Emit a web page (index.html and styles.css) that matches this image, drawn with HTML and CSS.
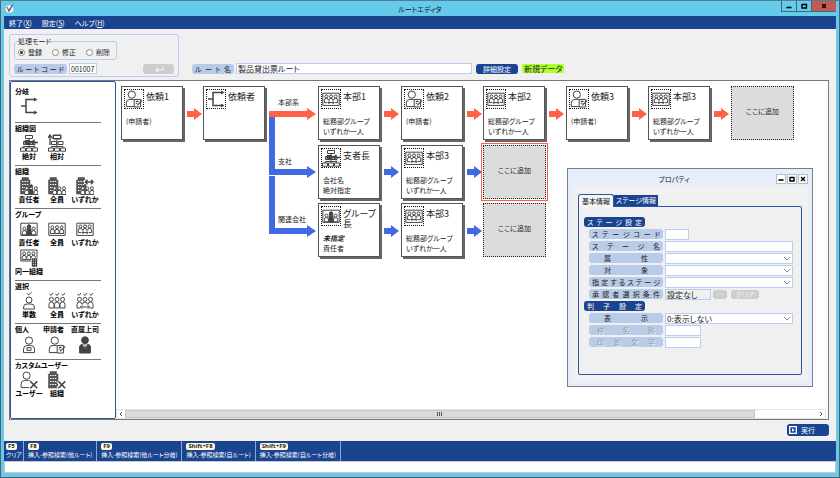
FILE: index.html
```html
<!DOCTYPE html>
<html lang="ja">
<head>
    <meta charset="UTF-8">
    <meta name="viewport" content="width=device-width, initial-scale=1.0">
    <title>ルートエディタ</title>
    <link rel="stylesheet" href="styles.css">
</head>
<body>
    <!-- icon set -->
    <svg class="sprite" aria-hidden="true">
        <defs>
            <g id="bust">
                <circle cx="0" cy="-2.2" r="1.5"/>
                <path d="M-2 4V1.6Q-2 -.2 0 -.2T2 1.6V4z"/>
            </g>
            <g id="trio">
                <use href="#bust" x="-4.6"/>
                <use href="#bust" x="4.6"/>
                <use href="#bust"/>
            </g>
            <g id="person">
                <circle cx="0" cy="0" r="3.6"/>
                <path d="M-5.5 12V8.6Q-5.5 4.8 -1.8 4.8H1.8Q5.5 4.8 5.5 8.6V12z"/>
            </g>
            <g id="building">
                <path fill="#555" stroke="#555" stroke-width=".6" d="M0.5 17V3H2V.5H8.5V3H10V17z"/>
                <path stroke="#fff" stroke-width="1.2" stroke-dasharray="1.4 1" d="M2 4.5H9M2 7.5H9M2 10.5H9M2 13.5H9"/>
            </g>
            <g id="boxes">
                <path d="M5.5 1.5h7v3h-7zM3.5 7.5h5v3h-5zM10 7.5h5v3h-5zM.5 14h5v3.2h-5zM6.5 14h5v3.2h-5zM12.5 14h5v3.2h-5zM9 4.5v9M3.3 14v-1.5h11.6V14"/>
            </g>
        </defs>
        <symbol id="i-branch" viewBox="0 0 18 18">
            <path d="M1 9H6M15 2.5H6V15.5H15" stroke-width="1.5"/>
            <path d="M14 .5L17.5 2.5L14 4.5zM14 13.5L17.5 15.5L14 17.5z" fill="#444" stroke="none"/>
        </symbol>
        <symbol id="i-absolute" viewBox="0 0 18 18">
            <use href="#boxes"/>
            <path d="M5 6.5h5v4H5z" fill="#444"/>
            <path d="M18 8.5H12M14.5 5.8L11.5 8.5L14.5 11.2" stroke-width="1.3"/>
        </symbol>
        <symbol id="i-relative" viewBox="0 0 18 18">
            <use href="#boxes"/>
            <path d="M5 1h8v4H5z"/>
            <path d="M2 11V2M0 4L2 1L4 4" stroke-width="1.3"/>
        </symbol>
        <symbol id="i-org-leader" viewBox="0 0 18 18">
            <use href="#building"/>
            <g class="solid-bg"><use href="#trio" x="11.3" y="13.5"/></g>
            <path d="M10 17V12.5H12.6V17z" fill="#444"/>
            <circle cx="11.3" cy="9" r="1.2" fill="#444"/>
        </symbol>
        <symbol id="i-org-all" viewBox="0 0 18 18">
            <use href="#building"/>
            <g class="solid-bg"><use href="#trio" x="11.3" y="13.5"/></g>
        </symbol>
        <symbol id="i-org-any" viewBox="0 0 18 18">
            <use href="#building"/>
            <g class="solid-bg"><use href="#trio" x="11.3" y="13.5"/></g>
            <path d="M8 5H18" stroke="#fff" stroke-width="4"/>
            <path d="M9.5 5H17M11.5 2.8L9.3 5L11.5 7.2M15 2.8L17.2 5L15 7.2" stroke-width="1.3"/>
        </symbol>
        <symbol id="i-group-leader" viewBox="0 0 18 18">
            <path d="M.8 3.2H17.2V15.4H.8z"/>
            <use href="#trio" x="9" y="10.8"/>
            <path d="M7 15V9H11V15z" fill="#444"/>
            <circle cx="9" cy="6.6" r="1.8" fill="#444"/>
        </symbol>
        <symbol id="i-group-all" viewBox="0 0 18 18">
            <path d="M.8 3.2H17.2V15.4H.8z"/>
            <use href="#trio" x="9" y="9.5"/>
        </symbol>
        <symbol id="i-group-any" viewBox="0 0 18 18">
            <path d="M.8 3.2H17.2V15.4H.8z"/>
            <use href="#trio" x="9" y="8.6"/>
            <g class="solid-bg"><path d="M5 10.6H13V14.6H5z" stroke="none"/></g>
            <path d="M6 12.6H12M7.4 11.2L6 12.6L7.4 14M10.6 11.2L12 12.6L10.6 14"/>
        </symbol>
        <symbol id="i-group-same" viewBox="0 0 18 18">
            <path d="M.8 1H17V12H.8z"/>
            <use href="#trio" x="8.8" y="6.6"/>
            <path d="M11.5 18V9H17.5V18z" fill="#444" stroke="#fff" stroke-width=".6"/>
            <path d="M13 11.2h3M13 13.4h3M13 15.6h3" stroke="#fff" stroke-width=".8" stroke-dasharray="1 1"/>
        </symbol>
        <symbol id="i-pick-one" viewBox="0 0 18 18">
            <path d="M7 1.4L8.6 3L11.6 .4"/>
            <circle cx="9" cy="8" r="3"/>
            <path d="M3.6 17V15Q3.6 12 7 12H11Q14.4 12 14.4 15V17z"/>
        </symbol>
        <symbol id="i-pick-all" viewBox="0 0 18 18">
            <path d="M1.5 2L3 3.4L5 1M7.5 2L9 3.4L11 1M13.5 2L15 3.4L17 1"/>
            <circle cx="3.4" cy="7.4" r="2"/><circle cx="9" cy="7.4" r="2"/><circle cx="14.6" cy="7.4" r="2"/>
            <path d="M1 16V12.5Q1 10 3.4 10T6 12.5V16zM6.6 16V12.5Q6.6 10 9 10T11.4 12.5V16zM12 16V12.5Q12 10 14.6 10T17 12.5V16z"/>
        </symbol>
        <symbol id="i-pick-any" viewBox="0 0 18 18">
            <use href="#i-pick-all"/>
            <g class="solid-bg"><path d="M4 12.6H14V17.4H4z" stroke="none"/></g>
            <path d="M4.6 15H13.4M6.2 13.2L4.4 15L6.2 16.8M11.8 13.2L13.6 15L11.8 16.8"/>
        </symbol>
        <symbol id="i-person" viewBox="0 0 18 18">
            <use href="#person" x="9" y="4.6"/>
            <path d="M7 11.6H11V14.4H7z"/>
        </symbol>
        <symbol id="i-applicant" viewBox="0 0 18 18">
            <use href="#person" x="6.8" y="4.6"/>
            <g class="solid-bg"><path d="M9.2 9.4H15.6V17H9.2z"/></g>
            <path d="M10.8 11.4H13.6M10.8 13.2H12.6M12.2 15.4L17.2 10.4" stroke-width="1.1"/>
        </symbol>
        <symbol id="i-boss" viewBox="0 0 18 18">
            <circle cx="9" cy="4.2" r="3.4" fill="#444"/>
            <path d="M3.6 17V11Q3.6 8.4 6.4 8.4H11.6Q14.4 8.4 14.4 11V17z" fill="#444"/>
            <path d="M6.6 8.4L9 12.6L11.4 8.4z" fill="#fff" stroke="none"/>
            <path d="M9 9.4V14.5" stroke-width="1.2"/>
        </symbol>
        <symbol id="i-user-custom" viewBox="0 0 18 18">
            <use href="#person" x="6.6" y="4.6"/>
            <path d="M10 10L17.5 17.5M17.5 10L10 17.5" stroke="#fff" stroke-width="4"/>
            <path d="M10.4 10.4L17.2 17.2M17.2 10.4L10.4 17.2" stroke-width="1.5"/>
        </symbol>
        <symbol id="i-org-custom" viewBox="0 0 18 18">
            <use href="#building"/>
            <path d="M10 10L17.5 17.5M17.5 10L10 17.5" stroke="#fff" stroke-width="4"/>
            <path d="M10.4 10.4L17.2 17.2M17.2 10.4L10.4 17.2" stroke-width="1.5"/>
        </symbol>
    </svg>

    <div class="window">
        <header class="titlebar">
            <svg class="app-icon" viewBox="0 0 9 9">
                <circle cx="4.5" cy="5" r="3.8" fill="#fff" stroke="#c9d3da" stroke-width=".5"/>
                <path d="M2 3L4 7L5 5.5" fill="none" stroke="#e2492b" stroke-width="1.4"/>
                <path d="M4.2 6.6L7.6 .8" fill="none" stroke="#245db0" stroke-width="1.3"/>
            </svg>
            <h1>ルートエディタ</h1>
            <div class="window-buttons">
                <button aria-label="最小化"><svg viewBox="0 0 8 8"><path d="M1.5 5.5H6.5" stroke="#000" stroke-width="1.6"/></svg></button>
                <button aria-label="最大化"><svg viewBox="0 0 8 8"><path d="M2 2.5H6.5V6H2z" fill="none" stroke="#000" stroke-width="1.4"/></svg></button>
                <button class="close" aria-label="閉じる"><svg viewBox="0 0 8 8"><path d="M2.2 2L5.8 6M5.8 2L2.2 6" stroke="#000" stroke-width="1.4"/></svg></button>
            </div>
        </header>

        <nav class="menubar">
            <a href="#">終了(<u>X</u>)</a>
            <a href="#">設定(<u>S</u>)</a>
            <a href="#">ヘルプ(<u>H</u>)</a>
        </nav>

        <main class="content">
            <div class="form-head">
                <div class="mode-panel">
                    <fieldset class="mode">
                        <legend>処理モード</legend>
                        <label><input type="radio" name="mode" checked>登録</label>
                        <label><input type="radio" name="mode">修正</label>
                        <label><input type="radio" name="mode">削除</label>
                    </fieldset>
                    <div class="code-row">
                        <label class="tag" for="route-code">ルートコード</label>
                        <input class="field" id="route-code" value="001007">
                        <button class="btn-off enter" disabled aria-label="確定">
                            <svg viewBox="0 0 10 8"><path d="M9 1V5H2M4 3L2 5L4 7" fill="none" stroke="#f4f4f4" stroke-width="1.2"/></svg>
                        </button>
                    </div>
                </div>
                <div class="name-row">
                    <label class="tag" for="route-name">ルート名</label>
                    <input class="field" id="route-name" value="製品貸出票ルート">
                    <button class="btn">詳細設定</button>
                    <span class="new-data">新規データ</span>
                </div>
            </div>

            <div class="workspace">
                <aside class="palette">
                    <section>
                        <h2>分岐</h2>
                        <div class="tools">
                            <button aria-label="分岐"><svg><use href="#i-branch"/></svg></button>
                        </div>
                    </section>
                    <section>
                        <h2>組織図</h2>
                        <div class="tools">
                            <button><svg><use href="#i-absolute"/></svg>絶対</button>
                            <button><svg><use href="#i-relative"/></svg>相対</button>
                        </div>
                    </section>
                    <section>
                        <h2>組織</h2>
                        <div class="tools">
                            <button><svg><use href="#i-org-leader"/></svg>責任者</button>
                            <button><svg><use href="#i-org-all"/></svg>全員</button>
                            <button><svg><use href="#i-org-any"/></svg>いずれか</button>
                        </div>
                    </section>
                    <section>
                        <h2>グループ</h2>
                        <div class="tools">
                            <button><svg><use href="#i-group-leader"/></svg>責任者</button>
                            <button><svg><use href="#i-group-all"/></svg>全員</button>
                            <button><svg><use href="#i-group-any"/></svg>いずれか</button>
                            <button><svg><use href="#i-group-same"/></svg>同一組織</button>
                        </div>
                    </section>
                    <section>
                        <h2>選択</h2>
                        <div class="tools">
                            <button><svg><use href="#i-pick-one"/></svg>単数</button>
                            <button><svg><use href="#i-pick-all"/></svg>全員</button>
                            <button><svg><use href="#i-pick-any"/></svg>いずれか</button>
                        </div>
                    </section>
                    <section>
                        <div class="tools people">
                            <button>個人<svg><use href="#i-person"/></svg></button>
                            <button>申請者<svg><use href="#i-applicant"/></svg></button>
                            <button>直属上司<svg><use href="#i-boss"/></svg></button>
                        </div>
                    </section>
                    <section>
                        <h2>カスタムユーザー</h2>
                        <div class="tools">
                            <button><svg><use href="#i-user-custom"/></svg>ユーザー</button>
                            <button><svg><use href="#i-org-custom"/></svg>組織</button>
                        </div>
                    </section>
                </aside>

                <div class="canvas-wrap">
                    <div class="canvas">
                        <svg class="wires" viewBox="0 0 712 190">
                            <defs>
                                <path id="arrow" d="M0 -3H7V-6L15 0L7 6V3H0z"/>
                            </defs>
                            <g fill="#4169e1">
                                <path d="M153 35H159V88H191V85L200 91L191 97V94H153z"/>
                                <path d="M153 95H159V147H191V144L200 150L191 156V153H153z"/>
                                <use href="#arrow" x="268" y="91"/>
                                <use href="#arrow" x="351" y="91"/>
                                <use href="#arrow" x="268" y="150"/>
                                <use href="#arrow" x="351" y="150"/>
                            </g>
                            <g fill="#ff6347">
                                <path d="M153 30H191V27L200 33L191 39V36H153z"/>
                                <use href="#arrow" x="71" y="33"/>
                                <use href="#arrow" x="268" y="33"/>
                                <use href="#arrow" x="351" y="33"/>
                                <use href="#arrow" x="433" y="33"/>
                                <use href="#arrow" x="516" y="33"/>
                                <use href="#arrow" x="598" y="33"/>
                            </g>
                        </svg>

                        <span class="wire-label row-1">本部系</span>
                        <span class="wire-label row-2">支社</span>
                        <span class="wire-label row-3">関連会社</span>

                        <div class="node row-1 col-1">
                            <svg><use href="#i-applicant"/></svg><h3>依頼1</h3>
                            <p>(申請者)</p>
                        </div>
                        <div class="node row-1 col-2">
                            <svg><use href="#i-branch"/></svg><h3>依頼者</h3>
                        </div>
                        <div class="node row-1 col-3">
                            <svg><use href="#i-group-any"/></svg><h3>本部1</h3>
                            <p>総務部グループ<br>いずれか一人</p>
                        </div>
                        <div class="node row-1 col-4">
                            <svg><use href="#i-applicant"/></svg><h3>依頼2</h3>
                            <p>(申請者)</p>
                        </div>
                        <div class="node row-1 col-5">
                            <svg><use href="#i-group-any"/></svg><h3>本部2</h3>
                            <p>総務部グループ<br>いずれか一人</p>
                        </div>
                        <div class="node row-1 col-6">
                            <svg><use href="#i-applicant"/></svg><h3>依頼3</h3>
                            <p>(申請者)</p>
                        </div>
                        <div class="node row-1 col-7">
                            <svg><use href="#i-group-any"/></svg><h3>本部3</h3>
                            <p>総務部グループ<br>いずれか一人</p>
                        </div>
                        <button class="add row-1 col-8">ここに追加</button>

                        <div class="node row-2 col-3">
                            <svg><use href="#i-absolute"/></svg><h3>支者長</h3>
                            <p>会社名<br>絶対指定</p>
                        </div>
                        <div class="node row-2 col-4">
                            <svg><use href="#i-group-any"/></svg><h3>本部3</h3>
                            <p>総務部グループ<br>いずれか一人</p>
                        </div>
                        <button class="add selected row-2 col-5">ここに追加</button>

                        <div class="node row-3 col-3">
                            <svg><use href="#i-group-leader"/></svg><h3>グループ長</h3>
                            <p><em>未指定</em><br>責任者</p>
                        </div>
                        <div class="node row-3 col-4">
                            <svg><use href="#i-group-any"/></svg><h3>本部3</h3>
                            <p>総務部グループ<br>いずれか一人</p>
                        </div>
                        <button class="add row-3 col-5">ここに追加</button>

                        <section class="dialog">
                            <header>
                                <h2>プロパティ</h2>
                                <div class="dialog-buttons">
                                    <button aria-label="最小化"><svg viewBox="0 0 8 8"><path d="M1.5 5H6.5" stroke="#000" stroke-width="1.6"/></svg></button>
                                    <button aria-label="最大化"><svg viewBox="0 0 8 8"><path d="M2 2.5H6V6H2z" fill="none" stroke="#000" stroke-width="1.4"/></svg></button>
                                    <button aria-label="閉じる"><svg viewBox="0 0 8 8"><path d="M2 2L6 6M6 2L2 6" stroke="#000" stroke-width="1.4"/></svg></button>
                                </div>
                            </header>
                            <div class="dialog-body">
                                <div class="tabs">
                                    <button class="tab active">基本情報</button>
                                    <button class="tab">ステージ情報</button>
                                </div>
                                <form class="tab-panel">
                                    <h3>ステージ設定</h3>
                                    <div class="prop">
                                        <label class="tag" for="p-code">ステージコード</label>
                                        <input class="field tiny" id="p-code">
                                    </div>
                                    <div class="prop">
                                        <label class="tag" for="p-name">ステージ名</label>
                                        <input class="field wide" id="p-name">
                                    </div>
                                    <div class="prop">
                                        <label class="tag indent" for="p-attr">属性</label>
                                        <select class="field wide" id="p-attr"><option></option></select>
                                    </div>
                                    <div class="prop">
                                        <label class="tag indent" for="p-target">対象</label>
                                        <select class="field wide" id="p-target"><option></option></select>
                                    </div>
                                    <div class="prop">
                                        <label class="tag" for="p-stage">指定するステージ</label>
                                        <select class="field wide" id="p-stage"><option></option></select>
                                    </div>
                                    <div class="prop">
                                        <label class="tag" for="p-cond">承認者選択条件</label>
                                        <input class="field readonly" id="p-cond" value="設定なし" readonly>
                                        <button class="btn-off dots" type="button" disabled>…</button>
                                        <button class="btn-off clear" type="button" disabled>クリア</button>
                                    </div>
                                    <h3>判子設定</h3>
                                    <div class="prop">
                                        <label class="tag indent" for="p-show">表示</label>
                                        <select class="field wide" id="p-show"><option>0:表示しない</option></select>
                                    </div>
                                    <div class="prop">
                                        <label class="tag off" for="p-frame">枠名称</label>
                                        <input class="field small" id="p-frame">
                                    </div>
                                    <div class="prop">
                                        <label class="tag off" for="p-stamp">印影文字</label>
                                        <input class="field small" id="p-stamp">
                                    </div>
                                </form>
                            </div>
                        </section>
                    </div>
                    <div class="scrollbar">
                        <button aria-label="左へ"><svg viewBox="0 0 8 8"><path d="M5 2L3 4L5 6" fill="none" stroke="#555"/></svg></button>
                        <div class="track"><div class="thumb"><i></i><i></i><i></i></div></div>
                        <button aria-label="右へ"><svg viewBox="0 0 8 8"><path d="M3 2L5 4L3 6" fill="none" stroke="#555"/></svg></button>
                    </div>
                </div>
            </div>

            <div class="actions">
                <button class="btn run">
                    <svg viewBox="0 0 8 8"><path d="M.7 .7H7.3V7.3H.7z" fill="none" stroke="#fff" stroke-width="1.3"/><path d="M3 2.2L5.8 4L3 5.8z" fill="#fff"/></svg>実行
                </button>
            </div>
        </main>

        <footer>
            <div class="keys">
                <button><kbd>F5</kbd>クリア</button>
                <button><kbd>F8</kbd>挿入-参照検索(他ルート)</button>
                <button><kbd>F9</kbd>挿入-参照検索(他ルート分岐)</button>
                <button><kbd>Shift+F8</kbd>挿入-参照検索(自ルート)</button>
                <button><kbd>Shift+F9</kbd>挿入-参照検索(自ルート分岐)</button>
            </div>
            <div class="status"></div>
        </footer>
    </div>
</body>
</html>
```
FILE: styles.css
```css
* {
    box-sizing: border-box;
}
body {
    margin: 0;
    font-family: "Noto Sans CJK JP", sans-serif;
    font-size: 7px;
    line-height: 10px;
    font-feature-settings: "palt";
    color: #222;
}
h1, h2, h3, p {
    margin: 0;
    font-size: inherit;
    font-weight: normal;
}
button, input, select {
    margin: 0;
    padding: 0;
    border: 0;
    background: none;
    color: inherit;
    font: inherit;
    font-feature-settings: inherit;
}
svg {
    fill: none;
    stroke: none;
}
.sprite {
    position: absolute;
    width: 0;
    height: 0;
}
.solid-bg {
    fill: #fff;
}

.window {
    display: flex;
    flex-direction: column;
    height: 100vh;
    padding: 0 3px 4px;
    border: 1px solid #53646c;
    border-top-color: #4d7f91;
    background: #66caea;
}

/* title bar and menu */
.titlebar {
    display: grid;
    grid-template-columns: 1fr auto 1fr;
    align-items: center;
    height: 15px;
    font-size: 7px;
    color: #111;
}
.app-icon {
    width: 9px;
    height: 9px;
    margin-left: 1px;
}
.window-buttons {
    display: flex;
    justify-self: end;
    align-self: start;
}
.window-buttons button {
    display: flex;
    align-items: center;
    justify-content: center;
    width: 15px;
    height: 11px;
    border: 1px solid #3a6b7c;
    border-top: 0;
    border-right: 0;
}
.window-buttons .close {
    width: 25px;
    background: #c65a52;
}
.window-buttons svg {
    width: 8px;
    height: 8px;
}
.menubar {
    display: flex;
    align-items: center;
    gap: 10px;
    height: 13px;
    padding: 0 5px;
    background: #1a4490;
}
.menubar a {
    color: #fff;
    text-decoration: none;
}

/* header form */
.content {
    display: flex;
    flex: 1;
    flex-direction: column;
    min-height: 0;
    background: #f0f0f0;
}
.form-head {
    display: flex;
    align-items: flex-end;
    gap: 13px;
    height: 51px;
    padding: 5px 5px 3px;
}
.mode-panel {
    width: 170px;
    height: 43px;
    padding: 2px 4px;
    border: 1px solid #b9cdf0;
    border-radius: 3px;
}
.mode {
    display: flex;
    align-items: center;
    gap: 10px;
    width: 103px;
    height: 23px;
    margin: 0;
    padding: 0 3px;
    border: 1px solid #b9cdf0;
    border-radius: 3px;
}
.mode legend {
    height: 8px;
    padding: 0;
    line-height: 8px;
}
.mode label {
    display: flex;
    align-items: center;
    gap: 3px;
    line-height: 9px;
}
.mode input {
    appearance: none;
    width: 7px;
    height: 7px;
    border: 1px solid #888;
    border-radius: 50%;
    background: #fff;
}
.mode input:checked {
    background: radial-gradient(#333 1px, #fff 2px);
}
.code-row, .name-row {
    display: flex;
    align-items: center;
    gap: 2px;
}
.code-row {
    margin-top: 3px;
}
.name-row {
    padding-bottom: 3px;
}
.tag {
    width: 53px;
    height: 10px;
    padding: 0 3px;
    border-radius: 3px;
    background: #b8cbe8;
    line-height: 10px;
    text-align: justify;
    text-align-last: justify;
}
.name-row .tag {
    width: 42px;
}
.field {
    height: 11px;
    padding: 0 1px;
    border: 1px solid #b9cff2;
    background: #fff;
    font-size: 8px;
    line-height: 9px;
}
#route-code {
    width: 28px;
    font-size: 7px;
}
#route-name {
    width: 236px;
}
.btn {
    width: 42px;
    height: 10px;
    margin-left: 2px;
    border-radius: 3px;
    background: #1a4490;
    color: #fff;
    line-height: 10px;
}
.btn-off {
    height: 9px;
    border-radius: 3px;
    background: #cdcdcd;
    color: #f4f4f4;
    line-height: 9px;
}
.enter {
    width: 31px;
    height: 10px;
    margin-left: auto;
}
.enter svg {
    display: block;
    width: 10px;
    height: 8px;
    margin: 0 auto;
}
.new-data {
    margin-left: 2px;
    padding: 0 2px;
    background: #adff2f;
    font-size: 8px;
    line-height: 9px;
}

/* workspace */
.workspace {
    display: flex;
    flex: 1;
    min-height: 0;
    margin: 0 7px 0 5px;
    border: 1px solid #777;
    background: #fff;
}
.palette {
    width: 106px;
    padding: 5px 0 0 4px;
    border: 1px solid #2a55a5;
    border-radius: 2px;
    color: #000;
    font-weight: bold;
}
.palette section {
    width: 86px;
    margin-bottom: 1px;
    padding-bottom: 4px;
    border-bottom: 1px solid #777;
}
.palette section:first-child {
    padding-bottom: 7px;
}
.palette section:last-child {
    border-bottom: 0;
}
.palette h2 {
    font-weight: bold;
    line-height: 8px;
}
.tools {
    display: grid;
    grid-template-columns: repeat(3, 28px);
}
.tools button {
    display: flex;
    flex-direction: column;
    align-items: center;
    line-height: 9px;
    white-space: nowrap;
}
.tools svg {
    width: 18px;
    height: 18px;
    margin-top: 2px;
    stroke: #444;
}
.people button {
    align-items: flex-start;
}
.people svg {
    align-self: center;
    margin: 2px 0 1px;
}
.canvas-wrap {
    display: flex;
    flex: 1;
    flex-direction: column;
    min-width: 0;
}
.canvas {
    position: relative;
    flex: 1;
    min-height: 0;
}
.wires {
    position: absolute;
    top: 0;
    left: 0;
    width: 712px;
    height: 190px;
}
.row-1 { top: 5px; }
.row-2 { top: 64px; }
.row-3 { top: 122px; }
.col-1 { left: 5px; }
.col-2 { left: 87px; }
.col-3 { left: 202px; }
.col-4 { left: 285px; }
.col-5 { left: 367px; }
.col-6 { left: 450px; }
.col-7 { left: 532px; }
.col-8 { left: 615px; }
.wire-label {
    position: absolute;
    left: 162px;
    padding-top: 11px;
}
.node {
    position: absolute;
    display: grid;
    grid-template-columns: 20px 1fr;
    grid-template-rows: 20px 1fr;
    column-gap: 2px;
    width: 62px;
    height: 54px;
    padding: 2px;
    border: 1px solid #555;
    background: #fff;
    box-shadow: 2px 2px 0 #666;
}
.node svg {
    width: 20px;
    height: 20px;
    border: 1px dotted #111;
    stroke: #444;
}
.node h3 {
    padding-top: 3px;
    font-size: 9px;
    line-height: 10px;
}
.node p {
    grid-column: 1 / 3;
    padding: 7px 0 0 2px;
}
.node em {
    font-weight: bold;
}
.add {
    position: absolute;
    width: 63px;
    height: 54px;
    padding-bottom: 4px;
    border: 1px dotted #222;
    background: #dcdcdc;
}
.add.selected {
    outline: 1px solid #ff6347;
    outline-offset: 1px;
}

/* property dialog */
.dialog {
    position: absolute;
    top: 87px;
    right: 15px;
    width: 246px;
    height: 219px;
    padding: 0 4px 4px;
    border: 1px solid #777f8c;
    background: #e6eefc;
}
.dialog header {
    display: flex;
    align-items: center;
    height: 17px;
    padding-top: 2px;
}
.dialog h2 {
    flex: 1;
    text-align: center;
}
.dialog-buttons {
    display: flex;
    gap: 1px;
}
.dialog-buttons button {
    width: 10px;
    height: 10px;
    border: 1px solid #b5bac4;
    background: #fff;
}
.dialog-buttons svg {
    display: block;
    width: 8px;
    height: 8px;
}
.dialog-body {
    height: 196px;
    padding: 7px 6px;
    background: #f0f0f0;
}
.tabs {
    display: flex;
    align-items: flex-end;
    height: 13px;
}
.tab {
    width: 44px;
    height: 11px;
    background: #1a4490;
    color: #fff;
    line-height: 11px;
    white-space: nowrap;
}
.tab.active {
    z-index: 1;
    width: 36px;
    height: 13px;
    margin-bottom: -1px;
    border: 1px solid #2a55a5;
    border-bottom: 0;
    border-radius: 3px 3px 0 0;
    background: #f6f6f6;
    color: #111;
}
.tab-panel {
    height: 169px;
    padding: 9px 5px;
    border: 1px solid #2a55a5;
    border-radius: 0 2px 2px 2px;
}
.tab-panel h3 {
    width: 61px;
    height: 10px;
    margin: 1px 0;
    padding: 0 3px;
    border-radius: 3px;
    background: #1a4490;
    color: #fff;
    text-align: justify;
    text-align-last: justify;
}
.prop {
    display: flex;
    align-items: center;
    gap: 2px;
    height: 12px;
    padding-left: 5px;
}
.prop .tag {
    width: 74px;
}
.prop .indent {
    padding: 0 15px;
}
.prop .off {
    padding: 0 8px;
    color: #8f98a6;
    text-shadow: 1px 1px 0 #eef3fb;
}
.tiny {
    width: 24px;
}
.small {
    width: 36px;
}
.wide {
    width: 128px;
}
select.field {
    appearance: none;
    background: linear-gradient(45deg, transparent 35%, #888 35%, #888 65%, transparent 65%) right 5px top 3px / 3px 3px no-repeat,
                linear-gradient(-45deg, transparent 35%, #888 35%, #888 65%, transparent 65%) right 2px top 3px / 3px 3px no-repeat,
                #fff;
}
.readonly {
    width: 46px;
    background: #f0f0f0;
}
.dots {
    width: 14px;
}
.clear {
    width: 28px;
    margin-left: 2px;
}

/* horizontal scroll bar */
.scrollbar {
    display: flex;
    height: 10px;
    margin-right: 2px;
    border: 1px solid #e2e2e2;
}
.scrollbar button {
    width: 8px;
    height: 8px;
}
.scrollbar svg {
    display: block;
    width: 8px;
    height: 8px;
}
.track {
    flex: 1;
}
.thumb {
    display: flex;
    align-items: center;
    justify-content: center;
    gap: 1px;
    width: 91%;
    height: 8px;
    border: 1px solid #c8c8c8;
    background: #dadada;
}
.thumb i {
    width: 1px;
    height: 4px;
    background: #555;
}

.actions {
    display: flex;
    justify-content: flex-end;
    height: 21px;
    padding: 4px 7px 0 0;
}
.run {
    display: flex;
    align-items: center;
    gap: 4px;
    height: 12px;
    padding-left: 2px;
}
.run svg {
    width: 8px;
    height: 8px;
}

/* function keys */
.keys {
    display: flex;
    height: 20px;
    background: #1a4490;
    color: #fff;
}
.keys button {
    display: flex;
    flex-direction: column;
    align-items: flex-start;
    padding: 2px 4px 0;
    border-right: 1px solid #8ea5cd;
    font-size: 6px;
    line-height: 10px;
    white-space: nowrap;
}
.keys button:first-child {
    padding: 2px 1px 0 2px;
}
kbd {
    padding: 0 2px;
    border-radius: 2px;
    background: #fffbe0;
    color: #222;
    font-family: "Noto Sans", sans-serif;
    font-size: 6px;
    font-weight: bold;
    line-height: 7px;
}
.status {
    height: 12px;
    border: 1px solid #c9c9c9;
    background: #fff;
}
```
